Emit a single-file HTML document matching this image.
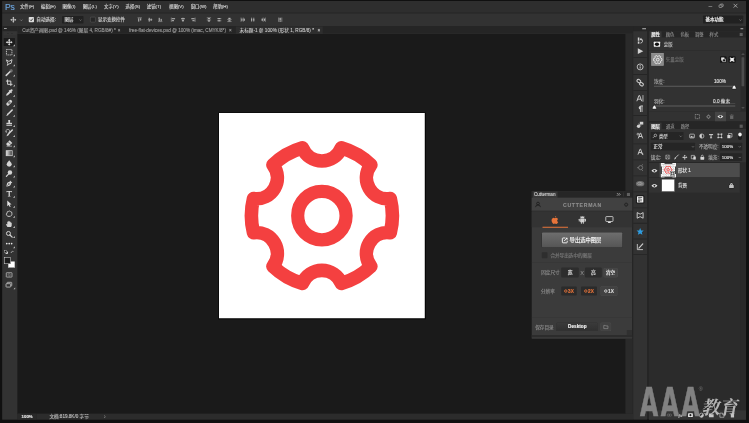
<!DOCTYPE html>
<html lang="zh-CN">
<head>
<meta charset="utf-8">
<title>Photoshop - Cutterman</title>
<style>
html,body{margin:0;padding:0;background:#101010;}
body{width:749px;height:423px;overflow:hidden;position:relative;}
#app{position:absolute;left:0;top:0;width:2996px;height:1692px;transform:scale(0.25);transform-origin:0 0;font-family:"Liberation Sans","Noto Sans CJK SC",sans-serif;filter:opacity(0.9999);-webkit-text-stroke:0.5px;}
#app div,#app svg{position:absolute;}
#app svg{overflow:visible;display:block;}
</style>
</head>
<body>
<div id="app">
<div style="left:0px;top:0px;width:2996px;height:1692px;background:#101010;overflow:hidden;"><div style="left:8.8px;top:4px;width:2975.2px;height:1674.4px;background:#252525;"><div style="left:0px;top:0px;width:2975.2px;height:46.8px;background:#2e2e2e;"><div style="left:10.8px;top:-0.48px;font-size:34.4px;line-height:48.16px;color:#6ba4de;white-space:nowrap;letter-spacing:-0.2px;">Ps</div>
<div style="left:70.8px;top:11.28px;font-size:17.6px;line-height:24.64px;color:#d6d6d6;white-space:nowrap;">文件(F)</div>
<div style="left:155.2px;top:11.28px;font-size:17.6px;line-height:24.64px;color:#d6d6d6;white-space:nowrap;">编辑(E)</div>
<div style="left:241.2px;top:11.28px;font-size:17.6px;line-height:24.64px;color:#d6d6d6;white-space:nowrap;">图像(I)</div>
<div style="left:322px;top:11.28px;font-size:17.6px;line-height:24.64px;color:#d6d6d6;white-space:nowrap;">图层(L)</div>
<div style="left:407.2px;top:11.28px;font-size:17.6px;line-height:24.64px;color:#d6d6d6;white-space:nowrap;">文字(Y)</div>
<div style="left:493.6px;top:11.28px;font-size:17.6px;line-height:24.64px;color:#d6d6d6;white-space:nowrap;">选择(S)</div>
<div style="left:578.4px;top:11.28px;font-size:17.6px;line-height:24.64px;color:#d6d6d6;white-space:nowrap;">滤镜(T)</div>
<div style="left:667.2px;top:11.28px;font-size:17.6px;line-height:24.64px;color:#d6d6d6;white-space:nowrap;">视图(V)</div>
<div style="left:754px;top:11.28px;font-size:17.6px;line-height:24.64px;color:#d6d6d6;white-space:nowrap;">窗口(W)</div>
<div style="left:843.2px;top:11.28px;font-size:17.6px;line-height:24.64px;color:#d6d6d6;white-space:nowrap;">帮助(H)</div>
<div style="left:2825.6px;top:22px;width:14.8px;height:2.4px;background:#bdbdbd;"></div>
<svg viewBox="0 0 10 10" style="left:2865.2px;top:9.2px;width:20.8px;height:20.8px;"><rect x="1" y="3.4" width="5.6" height="4.6" rx="1" fill="none" stroke="#bdbdbd" stroke-width="1.2"/><path d="M3.4 3.2V2.6Q3.4 1.6 4.4 1.6H8Q9 1.6 9 2.6V5.4Q9 6.4 8 6.4H7" fill="none" stroke="#bdbdbd" stroke-width="1.2"/></svg>
<svg viewBox="0 0 10 10" style="left:2923.2px;top:8.8px;width:20px;height:20px;"><path d="M1.2 1.2L8.8 8.8M8.8 1.2L1.2 8.8" stroke="#cfcfcf" stroke-width="1.3" fill="none"/></svg>
</div>
<div style="left:0px;top:46.8px;width:2975.2px;height:2.8px;background:#242424;"></div>
<div style="left:0px;top:49.6px;width:2975.2px;height:50.4px;background:#323232;"><svg viewBox="0 0 10 10" style="left:31.6px;top:12.4px;width:26.4px;height:26.4px;"><path d="M5 0.4L6.7 2.6H5.6V4.4H7.4V3.3L9.6 5L7.4 6.7V5.6H5.6V7.4H6.7L5 9.6L3.3 7.4H4.4V5.6H2.6V6.7L0.4 5L2.6 3.3V4.4H4.4V2.6H3.3Z" fill="#d8d8d8"/></svg>
<svg viewBox="0 0 10 10" style="left:70.4px;top:20px;width:12.8px;height:12.8px;"><path d="M1.5 3.5L5 7L8.5 3.5" fill="none" stroke="#aaa" stroke-width="1.6"/></svg>
<div style="left:106px;top:14px;width:21.6px;height:21.6px;background:#dcdcdc;border-radius:3.2px;"><svg viewBox="0 0 10 10" style="left:2px;top:2px;width:17.6px;height:17.6px;"><path d="M2 5L4.3 7.4L8.2 2.4" fill="none" stroke="#222" stroke-width="1.9"/></svg>
</div>
<div style="left:136.4px;top:12.72px;font-size:18.4px;line-height:25.76px;color:#dadada;white-space:nowrap;">自动选择:</div>
<div style="left:239.2px;top:10.4px;width:85.6px;height:30px;background:#212121;border-radius:2.8px;"><div style="left:10.4px;top:2.6px;font-size:18px;line-height:25.2px;color:#dadada;white-space:nowrap;">图层</div>
<svg viewBox="0 0 10 10" style="left:67.6px;top:10px;width:12px;height:12px;"><path d="M1.5 3.5L5 7L8.5 3.5" fill="none" stroke="#aaa" stroke-width="1.6"/></svg>
</div>
<div style="left:352px;top:14px;width:21.6px;height:21.6px;background:#262626;border:1.8px solid #909090;border-radius:3.2px;box-sizing:border-box;"></div>
<div style="left:382.8px;top:13px;font-size:18px;line-height:25.2px;color:#dadada;white-space:nowrap;">显示变换控件</div>
<svg viewBox="0 0 10 10" style="left:539.2px;top:14.8px;width:21.6px;height:21.6px;"><path d="M1 1.5H9" stroke="#b4b4b4" stroke-width="1"/><rect x="2.2" y="2.5" width="2" height="6" fill="#b4b4b4"/><rect x="5.8" y="2.5" width="2" height="4" fill="#b4b4b4"/></svg>
<svg viewBox="0 0 10 10" style="left:580.8px;top:14.8px;width:21.6px;height:21.6px;"><path d="M1 5H9" stroke="#b4b4b4" stroke-width="1"/><rect x="2.2" y="1.5" width="2" height="7" fill="#b4b4b4"/><rect x="5.8" y="3" width="2" height="4" fill="#b4b4b4"/></svg>
<svg viewBox="0 0 10 10" style="left:620.8px;top:14.8px;width:21.6px;height:21.6px;"><path d="M1 8.5H9" stroke="#b4b4b4" stroke-width="1"/><rect x="2.2" y="1.5" width="2" height="6" fill="#b4b4b4"/><rect x="5.8" y="3.5" width="2" height="4" fill="#b4b4b4"/></svg>
<svg viewBox="0 0 10 10" style="left:673.2px;top:14.8px;width:21.6px;height:21.6px;"><path d="M1.5 1V9" stroke="#b4b4b4" stroke-width="1"/><rect x="2.5" y="2.2" width="6" height="2" fill="#b4b4b4"/><rect x="2.5" y="5.8" width="4" height="2" fill="#b4b4b4"/></svg>
<svg viewBox="0 0 10 10" style="left:712.4px;top:14.8px;width:21.6px;height:21.6px;"><path d="M5 1V9" stroke="#b4b4b4" stroke-width="1"/><rect x="1.5" y="2.2" width="7" height="2" fill="#b4b4b4"/><rect x="3" y="5.8" width="4" height="2" fill="#b4b4b4"/></svg>
<svg viewBox="0 0 10 10" style="left:753.2px;top:14.8px;width:21.6px;height:21.6px;"><path d="M8.5 1V9" stroke="#b4b4b4" stroke-width="1"/><rect x="1.5" y="2.2" width="6" height="2" fill="#b4b4b4"/><rect x="3.5" y="5.8" width="4" height="2" fill="#b4b4b4"/></svg>
<svg viewBox="0 0 10 10" style="left:816px;top:14.8px;width:21.6px;height:21.6px;"><path d="M1 1.5H9M1 5.5H9" stroke="#b4b4b4" stroke-width="1"/><rect x="3" y="2" width="4" height="2" fill="#b4b4b4"/><rect x="3" y="6" width="4" height="2.5" fill="#b4b4b4"/></svg>
<svg viewBox="0 0 10 10" style="left:857.6px;top:14.8px;width:21.6px;height:21.6px;"><path d="M1 3H9M1 7H9" stroke="#b4b4b4" stroke-width="1"/><rect x="3" y="2" width="4" height="2" fill="#b4b4b4"/><rect x="3" y="6" width="4" height="2" fill="#b4b4b4"/></svg>
<svg viewBox="0 0 10 10" style="left:898.4px;top:14.8px;width:21.6px;height:21.6px;"><path d="M1 4.5H9M1 8.5H9" stroke="#b4b4b4" stroke-width="1"/><rect x="3" y="1.5" width="4" height="2.5" fill="#b4b4b4"/><rect x="3" y="6" width="4" height="2" fill="#b4b4b4"/></svg>
<svg viewBox="0 0 10 10" style="left:952.4px;top:14.8px;width:21.6px;height:21.6px;"><path d="M1.5 1V9M5.5 1V9" stroke="#b4b4b4" stroke-width="1"/><rect x="2" y="3" width="2" height="4" fill="#b4b4b4"/><rect x="6" y="3" width="2.5" height="4" fill="#b4b4b4"/></svg>
<svg viewBox="0 0 10 10" style="left:991.2px;top:14.8px;width:21.6px;height:21.6px;"><path d="M3 1V9M7 1V9" stroke="#b4b4b4" stroke-width="1"/><rect x="2" y="3" width="2" height="4" fill="#b4b4b4"/><rect x="6" y="3" width="2" height="4" fill="#b4b4b4"/></svg>
<svg viewBox="0 0 10 10" style="left:1034px;top:14.8px;width:21.6px;height:21.6px;"><path d="M4.5 1V9M8.5 1V9" stroke="#b4b4b4" stroke-width="1"/><rect x="1.5" y="3" width="2.5" height="4" fill="#b4b4b4"/><rect x="6" y="3" width="2" height="4" fill="#b4b4b4"/></svg>
<svg viewBox="0 0 10 10" style="left:1101.6px;top:14.8px;width:21.6px;height:21.6px;"><path d="M2 1V9M8 1V9" stroke="#b4b4b4" stroke-width="1"/><rect x="3.4" y="1.5" width="3.2" height="1.8" fill="#b4b4b4"/><rect x="3.4" y="4.1" width="3.2" height="1.8" fill="#b4b4b4"/><rect x="3.4" y="6.7" width="3.2" height="1.8" fill="#b4b4b4"/></svg>
<div style="left:2803.2px;top:8.4px;width:160.8px;height:32.4px;background:#212121;border-radius:2.8px;"><div style="left:10.4px;top:4.2px;font-size:18px;line-height:25.2px;color:#e4e4e4;white-space:nowrap;font-weight:bold;">基本功能</div>
<svg viewBox="0 0 10 10" style="left:144.4px;top:12px;width:12px;height:12px;"><path d="M1.5 3.5L5 7L8.5 3.5" fill="none" stroke="#aaa" stroke-width="1.6"/></svg>
</div>
</div>
<div style="left:61.6px;top:100px;width:2462.8px;height:32px;background:#252525;"><div style="left:18.4px;top:4.98px;font-size:18.6px;line-height:26.04px;color:#9c9c9c;white-space:nowrap;">Cut资产画图.psd @ 146% (图层 4, RGB/8#) *</div>
<div style="left:405.6px;top:5.12px;font-size:18.4px;line-height:25.76px;color:#9a9a9a;white-space:nowrap;transform:translateX(-50%);">×</div>
<div style="left:445.6px;top:4.98px;font-size:18.6px;line-height:26.04px;color:#9c9c9c;white-space:nowrap;">free-flat-devices.psd @ 100% (imac, CMYK/8*)</div>
<div style="left:850.8px;top:5.12px;font-size:18.4px;line-height:25.76px;color:#9a9a9a;white-space:nowrap;transform:translateX(-50%);">×</div>
<div style="left:0px;top:29.2px;width:2462.8px;height:2.8px;background:#2a2a2a;"></div>
<div style="left:872.4px;top:2px;width:348px;height:30px;background:#2e2e2e;"><div style="left:15.2px;top:2.98px;font-size:18.6px;line-height:26.04px;color:#d8d8d8;white-space:nowrap;-webkit-text-stroke:0.2px;">未标题-1 @ 100% (形状 1, RGB/8) *</div>
<div style="left:332.4px;top:3.12px;font-size:18.4px;line-height:25.76px;color:#c0c0c0;white-space:nowrap;transform:translateX(-50%);">×</div>
</div>
</div>
<div style="left:0px;top:100px;width:61.6px;height:1574.4px;background:#323232;"><div style="left:0px;top:0px;width:61.6px;height:20.8px;background:#252525;"></div>
<div style="left:7.2px;top:8px;width:10.8px;height:2.8px;background:#c4c4c4;"></div>
<div style="left:4.4px;top:22.4px;width:53.6px;height:13.6px;background:#353535;"></div>
<div style="left:11.2px;top:28.4px;width:40px;height:1.6px;background:repeating-linear-gradient(90deg,#262626 0 1.6px,transparent 1.6px 3.2px);"></div>
<div style="left:6.4px;top:47.6px;width:45.2px;height:32px;background:#1c1c1c;border-radius:2px;"></div>
<svg viewBox="0 0 10 10" style="left:13.2px;top:50px;width:29.6px;height:29.6px;"><path d="M5 0.4L6.7 2.6H5.6V4.4H7.4V3.3L9.6 5L7.4 6.7V5.6H5.6V7.4H6.7L5 9.6L3.3 7.4H4.4V5.6H2.6V6.7L0.4 5L2.6 3.3V4.4H4.4V2.6H3.3Z" fill="#e6e6e6"/></svg>
<svg viewBox="0 0 10 10" style="left:43px;top:72.6px;width:7.6px;height:7.6px;"><path d="M10 0V10H0Z" fill="#c4c4c4" stroke="#1e1e1e" stroke-width="1.5" paint-order="stroke"/></svg>
<svg viewBox="0 0 10 10" style="left:13.2px;top:90.4px;width:29.6px;height:29.6px;"><rect x="1.3" y="1.3" width="7.4" height="7.4" fill="none" stroke="#d4d4d4" stroke-width="1.1" stroke-dasharray="1.7 0.9"/></svg>
<svg viewBox="0 0 10 10" style="left:43px;top:113px;width:7.6px;height:7.6px;"><path d="M10 0V10H0Z" fill="#c4c4c4" stroke="#1e1e1e" stroke-width="1.5" paint-order="stroke"/></svg>
<svg viewBox="0 0 10 10" style="left:13.2px;top:130.8px;width:29.6px;height:29.6px;"><path d="M1.2 1.5L4.6 3.6L8.8 1.2L7.6 6.2L4.2 7.2L2.6 9L3.2 6.2Z" fill="none" stroke="#d4d4d4" stroke-width="1.2" stroke-linejoin="round"/></svg>
<svg viewBox="0 0 10 10" style="left:43px;top:153.4px;width:7.6px;height:7.6px;"><path d="M10 0V10H0Z" fill="#c4c4c4" stroke="#1e1e1e" stroke-width="1.5" paint-order="stroke"/></svg>
<svg viewBox="0 0 10 10" style="left:13.2px;top:171.2px;width:29.6px;height:29.6px;"><path d="M1 9L6 4" stroke="#d4d4d4" stroke-width="2.1" stroke-linecap="round"/><path d="M7.6 0.6V2.2M7.6 3.6V5M5.6 2.8H6.9M8.4 2.8H9.7M6.3 1.5L6.9 2.1M8.9 1.5L8.3 2.1M8.9 4.1L8.3 3.5" stroke="#d4d4d4" stroke-width="0.8"/></svg>
<svg viewBox="0 0 10 10" style="left:43px;top:193.8px;width:7.6px;height:7.6px;"><path d="M10 0V10H0Z" fill="#c4c4c4" stroke="#1e1e1e" stroke-width="1.5" paint-order="stroke"/></svg>
<svg viewBox="0 0 10 10" style="left:13.2px;top:211.6px;width:29.6px;height:29.6px;"><path d="M2.8 0.6V7.2H9.4M0.6 2.8H7.2V9.4" fill="none" stroke="#d4d4d4" stroke-width="1.3"/></svg>
<svg viewBox="0 0 10 10" style="left:43px;top:234.2px;width:7.6px;height:7.6px;"><path d="M10 0V10H0Z" fill="#c4c4c4" stroke="#1e1e1e" stroke-width="1.5" paint-order="stroke"/></svg>
<svg viewBox="0 0 10 10" style="left:13.2px;top:252px;width:29.6px;height:29.6px;"><path d="M0.8 9.2L1.4 6.8L5.4 2.8L7.2 4.6L3.2 8.6Z" fill="#d4d4d4"/><path d="M4.8 1.8L8.2 5.2" stroke="#d4d4d4" stroke-width="1.5"/><path d="M6.6 3.4L8.2 1.8" stroke="#d4d4d4" stroke-width="2.8" stroke-linecap="round"/></svg>
<svg viewBox="0 0 10 10" style="left:43px;top:274.6px;width:7.6px;height:7.6px;"><path d="M10 0V10H0Z" fill="#c4c4c4" stroke="#1e1e1e" stroke-width="1.5" paint-order="stroke"/></svg>
<svg viewBox="0 0 10 10" style="left:13.2px;top:292.4px;width:29.6px;height:29.6px;"><g transform="rotate(-45 5 5)"><rect x="0.4" y="2.9" width="9.2" height="4.2" rx="1.9" fill="#d4d4d4"/><rect x="3.4" y="3.4" width="3.2" height="3.2" fill="#2f2f2f" opacity=".55"/></g></svg>
<svg viewBox="0 0 10 10" style="left:43px;top:315px;width:7.6px;height:7.6px;"><path d="M10 0V10H0Z" fill="#c4c4c4" stroke="#1e1e1e" stroke-width="1.5" paint-order="stroke"/></svg>
<svg viewBox="0 0 10 10" style="left:13.2px;top:332.8px;width:29.6px;height:29.6px;"><path d="M9 1L4.6 5.4" stroke="#d4d4d4" stroke-width="2.2" stroke-linecap="round"/><path d="M3.9 5.2L4.8 6.1Q4.4 8.6 0.9 9.1Q2.2 7.4 2.2 6.4Q2.6 5.2 3.9 5.2Z" fill="#d4d4d4"/></svg>
<svg viewBox="0 0 10 10" style="left:43px;top:355.4px;width:7.6px;height:7.6px;"><path d="M10 0V10H0Z" fill="#c4c4c4" stroke="#1e1e1e" stroke-width="1.5" paint-order="stroke"/></svg>
<svg viewBox="0 0 10 10" style="left:13.2px;top:373.2px;width:29.6px;height:29.6px;"><path d="M3.6 0.9H6.4L6 4.6H8.2Q8.8 4.6 8.8 5.2V6.6H1.2V5.2Q1.2 4.6 1.8 4.6H4Z" fill="#d4d4d4"/><rect x="1.2" y="7.6" width="7.6" height="1.2" fill="#d4d4d4"/></svg>
<svg viewBox="0 0 10 10" style="left:43px;top:395.8px;width:7.6px;height:7.6px;"><path d="M10 0V10H0Z" fill="#c4c4c4" stroke="#1e1e1e" stroke-width="1.5" paint-order="stroke"/></svg>
<svg viewBox="0 0 10 10" style="left:13.2px;top:413.6px;width:29.6px;height:29.6px;"><path d="M9.2 0.8L4.8 5.2" stroke="#d4d4d4" stroke-width="2" stroke-linecap="round"/><path d="M4 5L5 6Q4.6 8.4 1.2 9Q2.4 7.4 2.4 6.4Q2.8 5.2 4 5Z" fill="#d4d4d4"/><path d="M0.8 3.6A2.6 2.6 0 1 1 3.6 5" fill="none" stroke="#d4d4d4" stroke-width="0.9"/><path d="M0 2.6L0.8 4.4L2.4 3.2Z" fill="#d4d4d4"/></svg>
<svg viewBox="0 0 10 10" style="left:43px;top:436.2px;width:7.6px;height:7.6px;"><path d="M10 0V10H0Z" fill="#c4c4c4" stroke="#1e1e1e" stroke-width="1.5" paint-order="stroke"/></svg>
<svg viewBox="0 0 10 10" style="left:13.2px;top:454px;width:29.6px;height:29.6px;"><path d="M5.6 1L9.2 4.6L5.4 8.4H2.6L0.8 6.2Z" fill="#d4d4d4"/><path d="M3.6 3.2L7.2 6.8" stroke="#2f2f2f" stroke-width="0.9"/><path d="M1.4 9H8.8" stroke="#d4d4d4" stroke-width="0.9"/></svg>
<svg viewBox="0 0 10 10" style="left:43px;top:476.6px;width:7.6px;height:7.6px;"><path d="M10 0V10H0Z" fill="#c4c4c4" stroke="#1e1e1e" stroke-width="1.5" paint-order="stroke"/></svg>
<svg viewBox="0 0 10 10" style="left:13.2px;top:494.4px;width:29.6px;height:29.6px;"><defs><linearGradient id="gr"><stop offset="0" stop-color="#e8e8e8"/><stop offset="1" stop-color="#3a3a3a"/></linearGradient></defs><rect x="0.9" y="1.6" width="8.2" height="6.8" fill="url(#gr)" stroke="#d4d4d4" stroke-width="1"/></svg>
<svg viewBox="0 0 10 10" style="left:43px;top:517px;width:7.6px;height:7.6px;"><path d="M10 0V10H0Z" fill="#c4c4c4" stroke="#1e1e1e" stroke-width="1.5" paint-order="stroke"/></svg>
<svg viewBox="0 0 10 10" style="left:13.2px;top:534.8px;width:29.6px;height:29.6px;"><path d="M5 0.8Q8.4 4.6 8.4 6.2A3.4 3.2 0 0 1 1.6 6.2Q1.6 4.6 5 0.8Z" fill="#d4d4d4"/></svg>
<svg viewBox="0 0 10 10" style="left:43px;top:557.4px;width:7.6px;height:7.6px;"><path d="M10 0V10H0Z" fill="#c4c4c4" stroke="#1e1e1e" stroke-width="1.5" paint-order="stroke"/></svg>
<svg viewBox="0 0 10 10" style="left:13.2px;top:575.2px;width:29.6px;height:29.6px;"><circle cx="6" cy="3.8" r="3" fill="#d4d4d4"/><path d="M4 6L1.2 9" stroke="#d4d4d4" stroke-width="1.6" stroke-linecap="round"/></svg>
<svg viewBox="0 0 10 10" style="left:43px;top:597.8px;width:7.6px;height:7.6px;"><path d="M10 0V10H0Z" fill="#c4c4c4" stroke="#1e1e1e" stroke-width="1.5" paint-order="stroke"/></svg>
<svg viewBox="0 0 10 10" style="left:13.2px;top:615.6px;width:29.6px;height:29.6px;"><path d="M6.2 0.8L9.2 3.8L7.6 4.4Q7.4 7 5.8 7.8L1 9L2.2 4.2Q3 2.6 5.6 2.4Z" fill="#d4d4d4"/><circle cx="4.6" cy="5.4" r="0.9" fill="#2f2f2f"/><path d="M1 9L4.2 5.8" stroke="#2f2f2f" stroke-width="0.6"/></svg>
<svg viewBox="0 0 10 10" style="left:43px;top:638.2px;width:7.6px;height:7.6px;"><path d="M10 0V10H0Z" fill="#c4c4c4" stroke="#1e1e1e" stroke-width="1.5" paint-order="stroke"/></svg>
<svg viewBox="0 0 10 10" style="left:13.2px;top:656px;width:29.6px;height:29.6px;"><path d="M1.4 1.2H8.6V3.2H7.8V2.4H5.8V8H6.8V8.9H3.2V8H4.2V2.4H2.2V3.2H1.4Z" fill="#e2e2e2"/></svg>
<svg viewBox="0 0 10 10" style="left:43px;top:678.6px;width:7.6px;height:7.6px;"><path d="M10 0V10H0Z" fill="#c4c4c4" stroke="#1e1e1e" stroke-width="1.5" paint-order="stroke"/></svg>
<svg viewBox="0 0 10 10" style="left:13.2px;top:696.4px;width:29.6px;height:29.6px;"><path d="M2.4 0.8V8.6L4.4 6.8L5.8 9.6L7 9L5.6 6.2H8.2Z" fill="#e2e2e2"/></svg>
<svg viewBox="0 0 10 10" style="left:43px;top:719px;width:7.6px;height:7.6px;"><path d="M10 0V10H0Z" fill="#c4c4c4" stroke="#1e1e1e" stroke-width="1.5" paint-order="stroke"/></svg>
<svg viewBox="0 0 10 10" style="left:13.2px;top:736.8px;width:29.6px;height:29.6px;"><path d="M2.2 3.4Q2 1.4 4 1.6Q5.6 0.4 6.8 1.8Q9 2 8.6 4.2Q9.6 6.2 7.6 7Q6.8 9 4.8 8.2Q2.6 9 2 7Q0.2 5.6 2.2 3.4Z" fill="none" stroke="#d4d4d4" stroke-width="1.2"/></svg>
<svg viewBox="0 0 10 10" style="left:43px;top:759.4px;width:7.6px;height:7.6px;"><path d="M10 0V10H0Z" fill="#c4c4c4" stroke="#1e1e1e" stroke-width="1.5" paint-order="stroke"/></svg>
<svg viewBox="0 0 10 10" style="left:13.2px;top:777.2px;width:29.6px;height:29.6px;"><path d="M2.6 9.2Q1.2 7.2 0.6 5.4Q1.4 4.6 2.4 5.8V2.2Q3.2 1.4 3.8 2.2V1.2Q4.7 0.4 5.4 1.2V2Q6.2 1.4 6.9 2.2V3.2Q7.8 2.6 8.4 3.6V6.6Q8.4 8.2 7.4 9.2Z" fill="#d4d4d4"/></svg>
<svg viewBox="0 0 10 10" style="left:43px;top:799.8px;width:7.6px;height:7.6px;"><path d="M10 0V10H0Z" fill="#c4c4c4" stroke="#1e1e1e" stroke-width="1.5" paint-order="stroke"/></svg>
<svg viewBox="0 0 10 10" style="left:13.2px;top:817.6px;width:29.6px;height:29.6px;"><circle cx="4" cy="4" r="2.7" fill="none" stroke="#d4d4d4" stroke-width="1.3"/><path d="M6 6L9 9" stroke="#d4d4d4" stroke-width="1.7" stroke-linecap="round"/></svg>
<svg viewBox="0 0 10 10" style="left:43px;top:840.2px;width:7.6px;height:7.6px;"><path d="M10 0V10H0Z" fill="#c4c4c4" stroke="#1e1e1e" stroke-width="1.5" paint-order="stroke"/></svg>
<svg viewBox="0 0 10 10" style="left:13.2px;top:858px;width:29.6px;height:29.6px;"><circle cx="1.7" cy="4.1" r="1.15" fill="#e8e8e8"/><circle cx="5" cy="4.1" r="1.15" fill="#e8e8e8"/><circle cx="8.3" cy="4.1" r="1.15" fill="#e8e8e8"/></svg>
<svg viewBox="0 0 10 10" style="left:43px;top:880.6px;width:7.6px;height:7.6px;"><path d="M10 0V10H0Z" fill="#c4c4c4" stroke="#1e1e1e" stroke-width="1.5" paint-order="stroke"/></svg>
<svg viewBox="0 0 10 10" style="left:8.8px;top:898px;width:14.4px;height:14.4px;"><rect x="3.6" y="3.6" width="5.6" height="5.6" fill="#eee" stroke="#eee" stroke-width="0.6"/><rect x="0.8" y="0.8" width="5.6" height="5.6" fill="#111" stroke="#ddd" stroke-width="1"/></svg>
<svg viewBox="0 0 10 10" style="left:32.8px;top:897.6px;width:15.2px;height:15.2px;"><path d="M2 4.4Q2.4 1.8 6.6 2.2" fill="none" stroke="#ccc" stroke-width="1.1"/><path d="M6 0.4L8.4 2.4L6 4.2Z" fill="#ccc"/><path d="M0.2 4L2 6.6L3.8 4Z" fill="#ccc"/></svg>
<div style="left:23.2px;top:941.2px;width:27.6px;height:26px;background:#ffffff;border:1.4px solid #1a1a1a;box-sizing:border-box;"></div>
<div style="left:7.2px;top:924.8px;width:26.8px;height:27.2px;background:#1c1c1c;border:2.8px solid #e0e0e0;box-sizing:border-box;"></div>
<svg viewBox="0 0 10 10" style="left:14.4px;top:982.4px;width:27.2px;height:27.2px;"><rect x="0.8" y="1.8" width="8.4" height="6.4" rx="0.6" fill="none" stroke="#cfcfcf" stroke-width="1"/><circle cx="5" cy="5" r="1.7" fill="none" stroke="#cfcfcf" stroke-width="0.9" stroke-dasharray="0.9 0.6"/></svg>
<svg viewBox="0 0 10 10" style="left:13.6px;top:1022.4px;width:27.2px;height:27.2px;"><rect x="0.8" y="3.2" width="6.8" height="5" rx="0.8" fill="none" stroke="#cfcfcf" stroke-width="1.1"/><path d="M2.4 3V2Q2.4 1.2 3.2 1.2H8.4Q9.2 1.2 9.2 2V5.6Q9.2 6.4 8.4 6.4H7.8" fill="none" stroke="#cfcfcf" stroke-width="1.1"/></svg>
<svg viewBox="0 0 10 10" style="left:45px;top:1045.8px;width:6.8px;height:6.8px;"><path d="M10 0V10H0Z" fill="#bdbdbd"/></svg>
</div>
<div style="left:61.6px;top:132px;width:2432.4px;height:1519.2px;background:#1a1a1a;overflow:hidden;"><div style="left:805.6px;top:316px;width:822.8px;height:821.2px;background:#ffffff;box-shadow:0.8px 1.2px 0 3px #000;"><svg viewBox="219 113 205.7 205.3" style="left:0px;top:0px;width:822.8px;height:821.2px;"><path d="M390.31 198.61A70.50 70.50 0 0 1 390.31 232.69A21.00 21.00 0 0 0 370.87 266.37A70.50 70.50 0 0 1 341.34 283.42A21.00 21.00 0 0 0 302.46 283.42A70.50 70.50 0 0 1 272.93 266.37A21.00 21.00 0 0 0 253.49 232.69A70.50 70.50 0 0 1 253.49 198.61A21.00 21.00 0 0 0 272.93 164.93A70.50 70.50 0 0 1 302.46 147.88A21.00 21.00 0 0 0 341.34 147.88A70.50 70.50 0 0 1 370.87 164.93A21.00 21.00 0 0 0 390.31 198.61Z" fill="none" stroke="#f44040" stroke-width="13.60" stroke-linejoin="round"/><circle cx="321.90" cy="215.65" r="24.2" fill="none" stroke="#f44040" stroke-width="13.2"/></svg>
</div>
</div>
<div style="left:61.6px;top:1651.2px;width:2462.8px;height:23.2px;background:#2c2c2c;"><div style="left:0px;top:0px;width:73.6px;height:23.2px;background:#292929;"></div>
<div style="left:73.6px;top:0px;width:2px;height:23.2px;background:#222;"></div>
<div style="left:16px;top:-0.44px;font-size:17.2px;line-height:24.08px;color:#e8e8e8;white-space:nowrap;font-weight:bold;">100%</div>
<div style="left:127.2px;top:-1.28px;font-size:18.4px;line-height:25.76px;color:#bdbdbd;white-space:nowrap;">文档:819.8K/0 字节</div>
<svg viewBox="0 0 10 10" style="left:341.2px;top:4.8px;width:13.6px;height:13.6px;"><path d="M3.2 1.2L7 5L3.2 8.8" fill="none" stroke="#aaa" stroke-width="1.6"/></svg>
</div>
<div style="left:2560px;top:109.2px;width:15.2px;height:3.6px;background:#b8b8b8;"></div>
<div style="left:2952.8px;top:109.2px;width:11.2px;height:3.6px;background:#b8b8b8;"></div>
<div style="left:2524.4px;top:120.8px;width:54.8px;height:1553.6px;background:#323232;"><div style="left:0px;top:102.8px;width:54.8px;height:3.6px;background:#252525;"></div>
<div style="left:0px;top:171.2px;width:54.8px;height:3.6px;background:#252525;"></div>
<div style="left:0px;top:236px;width:54.8px;height:3.6px;background:#252525;"></div>
<div style="left:0px;top:335.2px;width:54.8px;height:3.6px;background:#252525;"></div>
<div style="left:0px;top:448.8px;width:54.8px;height:3.6px;background:#252525;"></div>
<div style="left:0px;top:512.8px;width:54.8px;height:3.6px;background:#252525;"></div>
<div style="left:0px;top:576.8px;width:54.8px;height:3.6px;background:#252525;"></div>
<div style="left:0px;top:640.8px;width:54.8px;height:3.6px;background:#252525;"></div>
<div style="left:0px;top:704.8px;width:54.8px;height:3.6px;background:#252525;"></div>
<div style="left:0px;top:766.4px;width:54.8px;height:3.6px;background:#252525;"></div>
<div style="left:0px;top:829.6px;width:54.8px;height:3.6px;background:#252525;"></div>
<div style="left:0px;top:892px;width:54.8px;height:3.6px;background:#252525;"></div>
<svg viewBox="0 0 10 10" style="left:12px;top:22px;width:31.2px;height:31.2px;"><path d="M2 1H4V5H2ZM2 6H4V9H2Z" fill="#d0d0d0"/><path d="M5 3.2Q8.6 2.4 8 6Q7.6 7.8 5.4 8.2" fill="none" stroke="#d0d0d0" stroke-width="1.2"/><path d="M4.4 3.2L6.6 1.2V5Z" fill="#d0d0d0"/></svg>
<svg viewBox="0 0 10 10" style="left:12px;top:64.4px;width:31.2px;height:31.2px;"><path d="M2 1.4L9 5L2 8.6Z" fill="#d0d0d0"/></svg>
<svg viewBox="0 0 10 10" style="left:12px;top:127.6px;width:31.2px;height:31.2px;"><circle cx="5" cy="5" r="3.8" fill="none" stroke="#d0d0d0" stroke-width="1.1"/><path d="M5 4.4V7.2" stroke="#d0d0d0" stroke-width="1.2"/><circle cx="5" cy="3" r="0.7" fill="#d0d0d0"/></svg>
<svg viewBox="0 0 10 10" style="left:12px;top:190px;width:31.2px;height:31.2px;"><g fill="none" stroke="#d0d0d0" stroke-width="1.3"><rect x="0.8" y="1.2" width="5" height="3.6" rx="1.6" transform="rotate(35 3.3 3)"/><rect x="4.2" y="5.2" width="5" height="3.6" rx="1.6" transform="rotate(35 6.7 7)"/></g></svg>
<svg viewBox="0 0 10 10" style="left:12px;top:253.6px;width:31.2px;height:31.2px;"><path d="M0.8 8.6L3.4 1.4H4.4L7 8.6M1.8 6H6" fill="none" stroke="#d0d0d0" stroke-width="1.2"/><path d="M8.6 0.8V9.2" stroke="#d0d0d0" stroke-width="1"/></svg>
<svg viewBox="0 0 10 10" style="left:12px;top:294.8px;width:31.2px;height:31.2px;"><path d="M5.4 1.2H8.6M5.4 1.2V9M7.4 1.2V9" stroke="#d0d0d0" stroke-width="1.1" fill="none"/><path d="M5.4 1.2A2.3 2.3 0 0 0 5.4 5.8Z" fill="#d0d0d0"/></svg>
<svg viewBox="0 0 10 10" style="left:12px;top:358.8px;width:31.2px;height:31.2px;"><circle cx="3" cy="6.8" r="2.2" fill="#d0d0d0"/><rect x="4.6" y="1" width="4.4" height="3.6" fill="#d0d0d0"/><path d="M3.4 3.4L6 6" stroke="#d0d0d0" stroke-width="1"/></svg>
<svg viewBox="0 0 10 10" style="left:12px;top:401.2px;width:31.2px;height:31.2px;"><path d="M2.6 8.8L5 2.2H5.8L8.2 8.8M3.6 6.4H7.2" fill="none" stroke="#d0d0d0" stroke-width="1.2"/><circle cx="2.2" cy="3.4" r="1.2" fill="none" stroke="#d0d0d0" stroke-width="0.9"/></svg>
<svg viewBox="0 0 10 10" style="left:12px;top:466px;width:31.2px;height:31.2px;"><path d="M2.2 8.8L4.8 1.8H5.6L8 8.8M3.2 6.2H7" fill="none" stroke="#d0d0d0" stroke-width="1.2"/><path d="M5.4 6.4Q9.4 6.2 8.6 9.4" fill="none" stroke="#d0d0d0" stroke-width="0.9"/></svg>
<svg viewBox="0 0 10 10" style="left:12px;top:530px;width:31.2px;height:31.2px;"><circle cx="5.6" cy="5" r="2.6" fill="none" stroke="#777" stroke-width="1.2"/><path d="M1 5H3.4M6.8 2.4L8.6 0.8M6.8 7.6L8.6 9.2" stroke="#777" stroke-width="1.1"/></svg>
<svg viewBox="0 0 10 10" style="left:12px;top:594px;width:31.2px;height:31.2px;"><ellipse cx="5" cy="5" rx="5.4" ry="3.4" fill="#707070"/><ellipse cx="4.4" cy="4.8" rx="2.6" ry="1.5" fill="none" stroke="#a8a8a8" stroke-width="0.8"/><ellipse cx="6.2" cy="5.3" rx="2" ry="1.2" fill="none" stroke="#9a9a9a" stroke-width="0.7"/></svg>
<svg viewBox="0 0 10 10" style="left:12px;top:657.2px;width:31.2px;height:31.2px;"><rect x="-0.4" y="-0.4" width="10.8" height="10.8" rx="1.8" fill="#161616"/><rect x="0.9" y="0.9" width="8.2" height="8.2" rx="0.6" fill="#f2f2f2"/><path d="M2.4 2.6H7.6M2.4 4.4H5.4M6.2 4.2V7.6M2.6 6H4.6V7.6H2.6Z" fill="none" stroke="#333" stroke-width="0.9"/></svg>
<svg viewBox="0 0 10 10" style="left:12px;top:720.8px;width:31.2px;height:31.2px;"><path d="M1.2 1.4L5 3.4L8.8 1.4V8.6L5 6.6L1.2 8.6Z" fill="none" stroke="#d0d0d0" stroke-width="1.2" stroke-linejoin="round"/></svg>
<svg viewBox="0 0 10 10" style="left:12px;top:784.8px;width:31.2px;height:31.2px;"><path d="M5 0.6L6.3 3.7L9.6 4L7.1 6.2L7.9 9.4L5 7.7L2.1 9.4L2.9 6.2L0.4 4L3.7 3.7Z" fill="#2f9de0"/></svg>
<svg viewBox="0 0 10 10" style="left:12px;top:846px;width:31.2px;height:31.2px;"><path d="M1.4 1.6V8.8H8.6" fill="none" stroke="#d0d0d0" stroke-width="1.1"/><path d="M3.4 6.8L8.4 1.4" stroke="#d0d0d0" stroke-width="1.5" stroke-linecap="round"/></svg>
</div>
<div style="left:2587.2px;top:121.6px;width:387.6px;height:359.2px;background:#323232;"><div style="left:0px;top:0px;width:387.6px;height:24px;background:#262626;"></div>
<div style="left:2.4px;top:0px;width:47.2px;height:24.8px;background:#383838;"></div>
<div style="left:8.8px;top:0.08px;font-size:17.6px;line-height:24.64px;color:#f0f0f0;white-space:nowrap;font-weight:bold;">属性</div>
<div style="left:67.2px;top:0.36px;font-size:17.2px;line-height:24.08px;color:#8a8a8a;white-space:nowrap;">颜色</div>
<div style="left:125.6px;top:0.36px;font-size:17.2px;line-height:24.08px;color:#8a8a8a;white-space:nowrap;">色板</div>
<div style="left:184px;top:0.36px;font-size:17.2px;line-height:24.08px;color:#8a8a8a;white-space:nowrap;">调整</div>
<div style="left:242.4px;top:0.36px;font-size:17.2px;line-height:24.08px;color:#8a8a8a;white-space:nowrap;">样式</div>
<svg viewBox="0 0 10 10" style="left:362.4px;top:5.6px;width:13.6px;height:13.6px;"><path d="M0.5 2H9.5M0.5 5H9.5M0.5 8H9.5" stroke="#a0a0a0" stroke-width="1.5"/></svg>
<svg viewBox="0 0 10 10" style="left:15.2px;top:34px;width:33.6px;height:33.6px;"><rect x="0.6" y="1.4" width="8.8" height="7.2" rx="1.4" fill="#f4f4f4" stroke="#111" stroke-width="0.9"/><ellipse cx="5" cy="5" rx="2.5" ry="2" fill="#111"/></svg>
<div style="left:59.2px;top:38.88px;font-size:17.6px;line-height:24.64px;color:#bdbdbd;white-space:nowrap;">蒙版</div>
<div style="left:0px;top:74px;width:387.6px;height:2.8px;background:#282828;"></div>
<div style="left:9.2px;top:86.4px;width:50px;height:51.2px;background:#8a8a8a;border:1.4px solid #a4a4a4;box-sizing:border-box;"><svg viewBox="0 0 12.5 12.8" style="left:0px;top:0px;width:50px;height:51.2px;"><g transform="translate(6.25 6.40) scale(0.0594) translate(-321.90 -215.65)"><path d="M390.31 198.61A70.50 70.50 0 0 1 390.31 232.69A21.00 21.00 0 0 0 370.87 266.37A70.50 70.50 0 0 1 341.34 283.42A21.00 21.00 0 0 0 302.46 283.42A70.50 70.50 0 0 1 272.93 266.37A21.00 21.00 0 0 0 253.49 232.69A70.50 70.50 0 0 1 253.49 198.61A21.00 21.00 0 0 0 272.93 164.93A70.50 70.50 0 0 1 302.46 147.88A21.00 21.00 0 0 0 341.34 147.88A70.50 70.50 0 0 1 370.87 164.93A21.00 21.00 0 0 0 390.31 198.61Z" fill="none" stroke="#ffffff" stroke-width="13.0" stroke-linejoin="round"/><circle cx="321.90" cy="215.65" r="24.2" fill="none" stroke="#ffffff" stroke-width="13.0"/></g></svg>
</div>
<div style="left:67.2px;top:100.2px;font-size:18px;line-height:25.2px;color:#6c6c6c;white-space:nowrap;">矢量蒙版</div>
<svg viewBox="0 0 10 10" style="left:283.6px;top:99.6px;width:26.4px;height:26.4px;"><rect x="0" y="0" width="10" height="10" rx="1.8" fill="#141414"/><rect x="1.8" y="1.8" width="4.8" height="4.8" fill="#e8e8e8"/><rect x="4.2" y="4.2" width="4.2" height="4.2" fill="#141414" stroke="#e8e8e8" stroke-width="0.9"/></svg>
<svg viewBox="0 0 10 10" style="left:318.4px;top:98.4px;width:28.8px;height:28.8px;"><rect x="0" y="0.5" width="10" height="9" rx="1.8" fill="#141414"/><rect x="2.6" y="2.8" width="4.8" height="4.4" fill="#f0f0f0"/><path d="M1.8 2H3.4V3.6H1.8ZM6.6 2H8.2V3.6H6.6ZM1.8 6.4H3.4V8H1.8ZM6.6 6.4H8.2V8H6.6Z" fill="#f0f0f0"/></svg>
<div style="left:366.4px;top:76.8px;width:21.2px;height:243.2px;background:#2a2a2a;"></div>
<svg viewBox="0 0 10 10" style="left:369.6px;top:85.6px;width:12px;height:12px;"><path d="M1.5 6.8L5 3.2L8.5 6.8" fill="none" stroke="#b0b0b0" stroke-width="1.6"/></svg>
<div style="left:370.4px;top:103.2px;width:10.8px;height:116px;background:#4c4c4c;border-radius:2.4px;"></div>
<svg viewBox="0 0 10 10" style="left:369.6px;top:299.6px;width:12px;height:12px;"><path d="M1.5 3.2L5 6.8L8.5 3.2" fill="none" stroke="#b0b0b0" stroke-width="1.6"/></svg>
<div style="left:20px;top:187.52px;font-size:18.4px;line-height:25.76px;color:#a8a8a8;white-space:nowrap;">浓度:</div>
<div style="left:260px;top:187.24px;font-size:18.8px;line-height:26.32px;color:#e0e0e0;white-space:nowrap;">100%</div>
<div style="left:20px;top:217.6px;width:325.2px;height:3.6px;background:#5e5e5e;"></div>
<svg viewBox="0 0 10 10" style="left:330.8px;top:212.8px;width:19.2px;height:19.2px;"><path d="M0.6 9.4Q0.6 4.4 5 0.8Q9.4 4.4 9.4 9.4Z" fill="#f4f4f4" stroke="#111" stroke-width="0.9"/></svg>
<div style="left:20px;top:265.52px;font-size:18.4px;line-height:25.76px;color:#a8a8a8;white-space:nowrap;">羽化:</div>
<div style="left:256px;top:265.24px;font-size:18.8px;line-height:26.32px;color:#e0e0e0;white-space:nowrap;">0.0 像素</div>
<div style="left:256px;top:287.6px;width:89.2px;height:1.6px;background:#5a5a5a;"></div>
<div style="left:20px;top:296.8px;width:325.2px;height:3.6px;background:#5e5e5e;"></div>
<svg viewBox="0 0 10 10" style="left:11.6px;top:292.8px;width:19.2px;height:19.2px;"><path d="M0.6 9.4Q0.6 4.4 5 0.8Q9.4 4.4 9.4 9.4Z" fill="#f4f4f4" stroke="#111" stroke-width="0.9"/></svg>
<div style="left:0px;top:319.6px;width:387.6px;height:2px;background:#2a2a2a;"></div>
<div style="left:263.6px;top:321.6px;width:44.4px;height:37.6px;background:#454545;"></div>
<svg viewBox="0 0 10 10" style="left:183.2px;top:330.4px;width:20.8px;height:20.8px;"><rect x="1" y="1" width="8" height="8" fill="none" stroke="#b8b8b8" stroke-width="1.1" stroke-dasharray="2 1.1"/></svg>
<svg viewBox="0 0 10 10" style="left:225.6px;top:329.6px;width:24px;height:24px;"><path d="M5 1L9 5L5 9L1 5Z" fill="#7a7a7a"/><path d="M5 3.2L6.8 5L5 6.8L3.2 5Z" fill="#2c2c2c"/></svg>
<svg viewBox="0 0 10 10" style="left:273.2px;top:328px;width:24.8px;height:24.8px;"><path d="M0.3 5Q5 -0.4 9.7 5Q5 10.4 0.3 5Z" fill="#ececec"/><circle cx="5" cy="5" r="1.6" fill="#262626"/></svg>
<svg viewBox="0 0 10 10" style="left:320px;top:330px;width:21.6px;height:21.6px;"><path d="M2 3H8V9.2H2Z" fill="#666"/><path d="M1.2 2.2H8.8M3.8 1H6.2" stroke="#666" stroke-width="1.1"/></svg>
</div>
<div style="left:2587.2px;top:487.2px;width:387.6px;height:1187.2px;background:#323232;"><div style="left:0px;top:0px;width:387.6px;height:24.8px;background:#262626;"></div>
<div style="left:2.4px;top:0px;width:47.2px;height:25.6px;background:#383838;"></div>
<div style="left:8.8px;top:0.48px;font-size:17.6px;line-height:24.64px;color:#f0f0f0;white-space:nowrap;font-weight:bold;">图层</div>
<div style="left:68px;top:0.76px;font-size:17.2px;line-height:24.08px;color:#8a8a8a;white-space:nowrap;">通道</div>
<div style="left:127.2px;top:0.76px;font-size:17.2px;line-height:24.08px;color:#8a8a8a;white-space:nowrap;">路径</div>
<svg viewBox="0 0 10 10" style="left:362.4px;top:6.8px;width:13.6px;height:13.6px;"><path d="M0.5 2H9.5M0.5 5H9.5M0.5 8H9.5" stroke="#a0a0a0" stroke-width="1.5"/></svg>
<div style="left:7.2px;top:36.4px;width:131.2px;height:32.4px;background:#252525;border-radius:2.4px;"><svg viewBox="0 0 10 10" style="left:6.4px;top:6.8px;width:19.2px;height:19.2px;"><circle cx="6" cy="4" r="2.6" fill="none" stroke="#d6d6d6" stroke-width="1.3"/><path d="M4 6L1 9" stroke="#d6d6d6" stroke-width="1.5"/></svg>
<div style="left:32.4px;top:4.08px;font-size:17.6px;line-height:24.64px;color:#dcdcdc;white-space:nowrap;">类型</div>
<svg viewBox="0 0 10 10" style="left:113.6px;top:11.2px;width:12px;height:12px;"><path d="M1.5 3.2L5 6.8L8.5 3.2" fill="none" stroke="#a8a8a8" stroke-width="1.6"/></svg>
</div>
<svg viewBox="0 0 10 10" style="left:160.8px;top:41.6px;width:22.4px;height:22.4px;"><rect x="0.8" y="1.6" width="8.4" height="6.8" rx="1" fill="none" stroke="#d6d6d6" stroke-width="1.2"/><path d="M1.4 7.6L3.8 4.6L5.6 6.4L6.8 5.4L8.6 7.6Z" fill="#d6d6d6"/></svg>
<svg viewBox="0 0 10 10" style="left:199.6px;top:41.6px;width:22.4px;height:22.4px;"><circle cx="5" cy="5" r="3.8" fill="none" stroke="#d6d6d6" stroke-width="1.2"/><path d="M5 1.2A3.8 3.8 0 0 0 5 8.8Z" fill="#d6d6d6"/></svg>
<svg viewBox="0 0 10 10" style="left:236.8px;top:41.6px;width:22.4px;height:22.4px;"><path d="M1.4 1.4H8.6V3.4H7.6V2.8H5.9V7.8H6.9V8.8H3.1V7.8H4.1V2.8H2.4V3.4H1.4Z" fill="#d6d6d6"/></svg>
<svg viewBox="0 0 10 10" style="left:272.4px;top:41.2px;width:23.2px;height:23.2px;"><rect x="2" y="2" width="6" height="6" fill="none" stroke="#d6d6d6" stroke-width="1"/><path d="M0.8 0.8H3.2V3.2H0.8ZM6.8 0.8H9.2V3.2H6.8ZM0.8 6.8H3.2V9.2H0.8ZM6.8 6.8H9.2V9.2H6.8Z" fill="#d6d6d6"/></svg>
<svg viewBox="0 0 10 10" style="left:311.2px;top:41.2px;width:23.2px;height:23.2px;"><path d="M1 3.4H6.4V9H1Z" fill="#d6d6d6"/><path d="M3 3V1H9V7H7" fill="none" stroke="#d6d6d6" stroke-width="1.1"/></svg>
<div style="left:355.6px;top:37.6px;width:16.8px;height:31.2px;background:#1c1c1c;border-radius:8.4px;"></div>
<div style="left:356.8px;top:38.8px;width:14.4px;height:15.6px;background:#f0f0f0;border-radius:50%;"></div>
<div style="left:7.2px;top:79.6px;width:176.8px;height:31.6px;background:#252525;border-radius:2.4px;"><div style="left:11.2px;top:3.28px;font-size:17.6px;line-height:24.64px;color:#ececec;white-space:nowrap;">正常</div>
<svg viewBox="0 0 10 10" style="left:162.4px;top:10.4px;width:12px;height:12px;"><path d="M1.5 3.2L5 6.8L8.5 3.2" fill="none" stroke="#a8a8a8" stroke-width="1.6"/></svg>
</div>
<div style="left:199.6px;top:82.32px;font-size:18.4px;line-height:25.76px;color:#a8a8a8;white-space:nowrap;">不透明度:</div>
<div style="left:284px;top:79.6px;width:88.8px;height:31.6px;background:#252525;border-radius:2.4px;"><div style="left:7.2px;top:3.28px;font-size:17.6px;line-height:24.64px;color:#e0e0e0;white-space:nowrap;">100%</div>
<svg viewBox="0 0 10 10" style="left:72.8px;top:10.4px;width:12px;height:12px;"><path d="M1.5 3.2L5 6.8L8.5 3.2" fill="none" stroke="#a8a8a8" stroke-width="1.6"/></svg>
</div>
<div style="left:7.2px;top:124.72px;font-size:18.4px;line-height:25.76px;color:#a8a8a8;white-space:nowrap;">锁定:</div>
<svg viewBox="0 0 10 10" style="left:64px;top:127.2px;width:20.8px;height:20.8px;"><rect x="1" y="1" width="8" height="8" rx="1" fill="none" stroke="#9a9a9a" stroke-width="1"/><path d="M1.5 1.5H4V4H1.5ZM6 1.5H8.5V4H6ZM4 4H6V6H4ZM1.5 6H4V8.5H1.5ZM6 6H8.5V8.5H6Z" fill="#9a9a9a"/></svg>
<svg viewBox="0 0 10 10" style="left:98.4px;top:126.8px;width:21.6px;height:21.6px;"><path d="M9 0.8L4.2 5.6" stroke="#d6d6d6" stroke-width="1.5" stroke-linecap="round"/><path d="M3.6 5.2L4.8 6.4Q4 8.6 1 9.2Q2 7.6 2.2 6.4Q2.6 5.2 3.6 5.2Z" fill="#d6d6d6"/></svg>
<svg viewBox="0 0 10 10" style="left:132.4px;top:126.4px;width:22.4px;height:22.4px;"><path d="M5 0.4L6.7 2.6H5.6V4.4H7.4V3.3L9.6 5L7.4 6.7V5.6H5.6V7.4H6.7L5 9.6L3.3 7.4H4.4V5.6H2.6V6.7L0.4 5L2.6 3.3V4.4H4.4V2.6H3.3Z" fill="#d6d6d6"/></svg>
<svg viewBox="0 0 10 10" style="left:167.2px;top:126.4px;width:22.4px;height:22.4px;"><path d="M1 1.6H6.6V7.6H1Z" fill="none" stroke="#d6d6d6" stroke-width="1.1"/><path d="M4.6 3.6H9V9H4.6Z" fill="#d6d6d6"/></svg>
<svg viewBox="0 0 10 10" style="left:201.6px;top:126.4px;width:22.4px;height:22.4px;"><rect x="1.6" y="4.4" width="6.8" height="4.8" rx="0.8" fill="#d6d6d6"/><path d="M3.2 4.6V3Q3.2 1.2 5 1.2Q6.8 1.2 6.8 3V4.6" fill="none" stroke="#d6d6d6" stroke-width="1.2"/></svg>
<div style="left:236.8px;top:124.72px;font-size:18.4px;line-height:25.76px;color:#a8a8a8;white-space:nowrap;">填充:</div>
<div style="left:284px;top:121.6px;width:88.8px;height:31.2px;background:#252525;border-radius:2.4px;"><div style="left:7.2px;top:3.68px;font-size:17.6px;line-height:24.64px;color:#e0e0e0;white-space:nowrap;">100%</div>
<svg viewBox="0 0 10 10" style="left:72.8px;top:10.8px;width:12px;height:12px;"><path d="M1.5 3.2L5 6.8L8.5 3.2" fill="none" stroke="#a8a8a8" stroke-width="1.6"/></svg>
</div>
<div style="left:0px;top:158.4px;width:387.6px;height:992.8px;background:#2b2b2b;"></div>
<div style="left:364.8px;top:158.4px;width:22.8px;height:992.8px;background:#292929;"></div>
<div style="left:0px;top:158px;width:364.8px;height:2.4px;background:#262626;"></div>
<div style="left:0px;top:160.4px;width:363.2px;height:58px;background:#323232;"></div>
<div style="left:42.4px;top:160.4px;width:320.8px;height:58px;background:#4c4c4c;"></div>
<div style="left:0px;top:220.8px;width:363.2px;height:58.8px;background:#323232;"></div>
<svg viewBox="0 0 10 10" style="left:8.8px;top:178.4px;width:25.6px;height:25.6px;"><path d="M0.3 5Q5 -0.4 9.7 5Q5 10.4 0.3 5Z" fill="#ececec"/><circle cx="5" cy="5" r="1.6" fill="#262626"/></svg>
<div style="left:49.2px;top:161.6px;width:57.2px;height:56px;background:#ffffff;background:repeating-conic-gradient(#ffffff 0 25%,#cfcfcf 0 50%) 0 0/9.6px 9.6px;"><svg viewBox="0 0 14.3 14" style="left:0px;top:0px;width:57.2px;height:56px;"><g transform="translate(6.90 6.50) scale(0.0529) translate(-321.90 -215.65)"><path d="M390.31 198.61A70.50 70.50 0 0 1 390.31 232.69A21.00 21.00 0 0 0 370.87 266.37A70.50 70.50 0 0 1 341.34 283.42A21.00 21.00 0 0 0 302.46 283.42A70.50 70.50 0 0 1 272.93 266.37A21.00 21.00 0 0 0 253.49 232.69A70.50 70.50 0 0 1 253.49 198.61A21.00 21.00 0 0 0 272.93 164.93A70.50 70.50 0 0 1 302.46 147.88A21.00 21.00 0 0 0 341.34 147.88A70.50 70.50 0 0 1 370.87 164.93A21.00 21.00 0 0 0 390.31 198.61Z" fill="none" stroke="#f44040" stroke-width="17.0" stroke-linejoin="round"/><circle cx="321.90" cy="215.65" r="24.2" fill="none" stroke="#f44040" stroke-width="17.0"/></g></svg>
</div>
<svg viewBox="0 0 14.3 14" style="left:48px;top:160.4px;width:59.6px;height:58.4px;"><rect x="0.4" y="0.4" width="13.5" height="13.2" fill="none" stroke="#3a3a3a" stroke-width="0.9"/><path d="M0.4 3.4V0.4H3.4M10.9 0.4H13.9V3.4M13.9 10.6V13.6H10.9M3.4 13.6H0.4V10.6" fill="none" stroke="#f4f4f4" stroke-width="1"/></svg>
<svg viewBox="0 0 10 10" style="left:84px;top:194px;width:20px;height:20px;"><rect x="0.4" y="0.4" width="9.2" height="9.2" fill="#d8d8d8" stroke="#555" stroke-width="0.8"/><rect x="3" y="3" width="4" height="4" fill="none" stroke="#444" stroke-width="0.9"/><path d="M2 2H4V4H2ZM6 2H8V4H6ZM2 6H4V8H2ZM6 6H8V8H6Z" fill="#444"/></svg>
<div style="left:116px;top:178.6px;font-size:18px;line-height:25.2px;color:#e4e4e4;white-space:nowrap;">形状 1</div>
<div style="left:0px;top:218.4px;width:363.2px;height:2.4px;background:#292929;"></div>
<svg viewBox="0 0 10 10" style="left:8.8px;top:238.4px;width:25.6px;height:25.6px;"><path d="M0.3 5Q5 -0.4 9.7 5Q5 10.4 0.3 5Z" fill="#ececec"/><circle cx="5" cy="5" r="1.6" fill="#262626"/></svg>
<div style="left:50.8px;top:226px;width:51.2px;height:48.4px;background:#ffffff;border:1.4px solid #161616;box-sizing:border-box;"></div>
<div style="left:116px;top:238.6px;font-size:18px;line-height:25.2px;color:#e0e0e0;white-space:nowrap;">背景</div>
<svg viewBox="0 0 10 10" style="left:316.8px;top:238px;width:25.6px;height:25.6px;"><path d="M1.4 9V4.6L2.6 4.2Q2.8 1 5 1Q7.2 1 7.4 4.2L8.6 4.6V9Z" fill="#c2c2c2" stroke="#1a1a1a" stroke-width="1.2" paint-order="stroke"/><path d="M3.9 4.3Q4 2.6 5 2.6Q6 2.6 6.1 4.3Z" fill="#6a6a6a"/></svg>
<div style="left:0px;top:1151.2px;width:387.6px;height:36px;background:#343434;"></div>
<svg viewBox="0 0 10 10" style="left:71.2px;top:1159.2px;width:20.8px;height:20.8px;"><g fill="none" stroke="#6e6e6e" stroke-width="1.3"><rect x="0.6" y="3" width="5" height="4" rx="2"/><rect x="4.4" y="3" width="5" height="4" rx="2"/></g></svg>
<div style="left:126px;top:1156.72px;font-size:18.4px;line-height:25.76px;color:#c4c4c4;white-space:nowrap;font-weight:bold;transform:translateX(-50%);font-family:'Liberation Serif',serif;"><i>fx</i></div>
<svg viewBox="0 0 10 10" style="left:154.8px;top:1158.8px;width:21.6px;height:21.6px;"><rect x="0.6" y="1.6" width="8.8" height="6.8" rx="1" fill="#ececec"/><circle cx="5" cy="5" r="2" fill="#222"/></svg>
<svg viewBox="0 0 10 10" style="left:199.2px;top:1158.8px;width:21.6px;height:21.6px;"><circle cx="5" cy="5" r="3.8" fill="none" stroke="#c4c4c4" stroke-width="1.2"/><path d="M2.3 7.7A3.8 3.8 0 0 0 7.7 2.3Z" fill="#c4c4c4"/></svg>
<svg viewBox="0 0 10 10" style="left:238.4px;top:1158.4px;width:22.4px;height:22.4px;"><path d="M0.8 2H4L5 3.2H9.2V8.4H0.8Z" fill="#c4c4c4"/></svg>
<svg viewBox="0 0 10 10" style="left:280.8px;top:1158.8px;width:21.6px;height:21.6px;"><path d="M1.2 1.2H6.4L8.8 3.6V8.8H1.2Z" fill="none" stroke="#c4c4c4" stroke-width="1.2"/><path d="M6 1.4V4H8.6" fill="none" stroke="#c4c4c4" stroke-width="1"/></svg>
<svg viewBox="0 0 10 10" style="left:322.8px;top:1158.8px;width:21.6px;height:21.6px;"><path d="M2 3H8V9.2H2Z" fill="#c4c4c4"/><path d="M1.2 2.2H8.8M3.8 1H6.2" stroke="#c4c4c4" stroke-width="1.1"/></svg>
</div>
<div style="left:2493.6px;top:132px;width:28px;height:1519.2px;background:#2a2a2a;"></div>
<div style="left:2118.4px;top:761.2px;width:402px;height:588.8px;background:#3b3b3b;box-shadow:0 0 0 1.6px #1c1c1c;"><div style="left:0px;top:0px;width:402px;height:26px;background:#262626;"></div>
<div style="left:4px;top:1.2px;width:98.4px;height:25.2px;background:#383838;"><div style="left:4.8px;top:-0.48px;font-size:18.4px;line-height:25.76px;color:#e0e0e0;white-space:nowrap;-webkit-text-stroke:0.2px;">Cutterman</div>
</div>
<svg viewBox="0 0 10 10" style="left:340px;top:5.2px;width:15.2px;height:15.2px;"><path d="M0.6 1.6L4 5L0.6 8.4M5.6 1.6L9 5L5.6 8.4" fill="none" stroke="#d0d0d0" stroke-width="1.7"/></svg>
<div style="left:365.6px;top:5.2px;width:1.6px;height:15.2px;background:#555;"></div>
<svg viewBox="0 0 10 10" style="left:379.6px;top:6px;width:13.6px;height:13.6px;"><path d="M0.5 2H9.5M0.5 5H9.5M0.5 8H9.5" stroke="#a0a0a0" stroke-width="1.5"/></svg>
<div style="left:0px;top:26px;width:402px;height:52.8px;background:#414141;"></div>
<div style="left:0px;top:78px;width:402px;height:2.8px;background:#252525;"></div>
<svg viewBox="0 0 10 10" style="left:12.8px;top:40.8px;width:24px;height:24px;"><circle cx="5" cy="3.4" r="2.3" fill="none" stroke="#1c1c1c" stroke-width="1.4"/><path d="M1 9.4Q1 5.8 5 5.8Q9 5.8 9 9.4" fill="none" stroke="#1c1c1c" stroke-width="1.4"/></svg>
<div style="left:202.8px;top:40.52px;font-size:20.4px;line-height:28.56px;color:#8e8e8e;white-space:nowrap;font-weight:bold;transform:translateX(-50%);letter-spacing:2.96px;">CUTTERMAN</div>
<svg viewBox="0 0 10 10" style="left:368px;top:43.6px;width:19.2px;height:19.2px;"><circle cx="5" cy="5" r="3.4" fill="none" stroke="#202020" stroke-width="1.7" stroke-dasharray="2.1 0.6"/><circle cx="5" cy="5" r="2.6" fill="none" stroke="#202020" stroke-width="1.2"/></svg>
<div style="left:0px;top:80.8px;width:402px;height:62.8px;background:#333333;"></div>
<svg viewBox="0 0 10 10" style="left:75.2px;top:96.8px;width:34.4px;height:34.4px;"><path d="M5.3 2.6Q5.2 1 6.6 0.4Q6.8 1.9 5.3 2.6Z" fill="#e8743a"/><path d="M5 3.2Q6.2 2.4 7.4 2.8Q8.4 3.2 8.8 4Q7.4 4.9 7.8 6.4Q8.1 7.3 9 7.7Q8.4 9.2 7.4 9.7Q6.6 10 5.9 9.6Q5.1 9.3 4.4 9.6Q3.5 10 2.8 9.4Q1.2 7.8 1.2 5.6Q1.3 3.4 3 2.8Q4 2.5 5 3.2Z" fill="#e8743a"/></svg>
<svg viewBox="0 0 10 10" style="left:183.6px;top:96px;width:36.8px;height:36.8px;"><path d="M2.6 3.4A2.4 2.3 0 0 1 7.4 3.4Z" fill="#d2d2d2"/><rect x="2.6" y="3.8" width="4.8" height="3.8" rx="0.5" fill="#d2d2d2"/><rect x="1.1" y="3.8" width="1.1" height="3.1" rx="0.55" fill="#d2d2d2"/><rect x="7.8" y="3.8" width="1.1" height="3.1" rx="0.55" fill="#d2d2d2"/><rect x="3.4" y="7.2" width="1.1" height="2" rx="0.55" fill="#d2d2d2"/><rect x="5.5" y="7.2" width="1.1" height="2" rx="0.55" fill="#d2d2d2"/><path d="M3.2 1.6L2.7 0.8M6.8 1.6L7.3 0.8" stroke="#d2d2d2" stroke-width="0.5"/></svg>
<svg viewBox="0 0 10 10" style="left:292.4px;top:96px;width:35.2px;height:35.2px;"><rect x="0.9" y="1.5" width="8.2" height="5.6" rx="0.7" fill="none" stroke="#e4e4e4" stroke-width="0.85"/><path d="M3.8 7.3H6.2L6.8 8.8H3.2Z" fill="#e4e4e4"/></svg>
<div style="left:42.4px;top:141.6px;width:102px;height:4.4px;background:#e8743a;"></div>
<div style="left:40.8px;top:164.4px;width:320.8px;height:59.6px;background:linear-gradient(#6e6e6e,#555);border-radius:2.8px;box-shadow:0 0 0 1.4px #2a2a2a;"><svg viewBox="0 0 10 10" style="left:79.2px;top:19.6px;width:24.8px;height:24.8px;"><path d="M5.4 1.2H2Q1 1.2 1 2.2V8Q1 9 2 9H7.8Q8.8 9 8.8 8V5.6" fill="none" stroke="#fff" stroke-width="1.4"/><path d="M4 6L8.2 1.8" stroke="#fff" stroke-width="1.5"/><path d="M5.6 0.8H9.2V4.4Z" fill="#fff"/></svg>
<div style="left:110.4px;top:17.56px;font-size:21.2px;line-height:29.68px;color:#ffffff;white-space:nowrap;">导出选中图层</div>
</div>
<div style="left:39.6px;top:243.6px;width:23.6px;height:24.4px;background:#2e2e2e;border-radius:3.2px;"></div>
<div style="left:74.4px;top:242.72px;font-size:18.4px;line-height:25.76px;color:#7c7c7c;white-space:nowrap;">合并导出选中的图层</div>
<div style="left:0px;top:282.8px;width:402px;height:2px;background:#353535;"></div>
<div style="left:37.6px;top:312.72px;font-size:18.4px;line-height:25.76px;color:#8e8e8e;white-space:nowrap;">固定尺寸</div>
<div style="left:118px;top:304.4px;width:70px;height:40px;background:#2d2d2d;border-radius:3.6px;"><div style="left:35.2px;top:7.64px;font-size:18.8px;line-height:26.32px;color:#eaeaea;white-space:nowrap;transform:translateX(-50%);">宽</div>
</div>
<div style="left:200.8px;top:309.52px;font-size:22.4px;line-height:31.36px;color:#9c9c9c;white-space:nowrap;transform:translateX(-50%);-webkit-text-stroke:0;">X</div>
<div style="left:212.8px;top:304.4px;width:67.2px;height:40px;background:#2d2d2d;border-radius:3.6px;"><div style="left:33.2px;top:7.64px;font-size:18.8px;line-height:26.32px;color:#eaeaea;white-space:nowrap;transform:translateX(-50%);">高</div>
</div>
<div style="left:288.4px;top:307.6px;width:53.6px;height:35.2px;background:#444;border-radius:3.2px;box-shadow:0 0 0 1.2px #585858;"><div style="left:26.4px;top:4.72px;font-size:18.4px;line-height:25.76px;color:#f0f0f0;white-space:nowrap;transform:translateX(-50%);">清空</div>
</div>
<div style="left:36.8px;top:385.92px;font-size:18.4px;line-height:25.76px;color:#8e8e8e;white-space:nowrap;">分辨率</div>
<div style="left:118px;top:380.8px;width:61.6px;height:35.6px;background:#2b2b2b;border-radius:3.2px;"><svg viewBox="0 0 10 10" style="left:10.4px;top:10.8px;width:14.4px;height:14.4px;"><circle cx="5" cy="5" r="3.4" fill="none" stroke="#e8743a" stroke-width="2.4"/></svg>
<div style="left:38.4px;top:4.84px;font-size:18.8px;line-height:26.32px;color:#e8743a;white-space:nowrap;font-weight:bold;transform:translateX(-50%);">3X</div>
</div>
<div style="left:196.8px;top:380.8px;width:64px;height:35.6px;background:#2b2b2b;border-radius:3.2px;"><svg viewBox="0 0 10 10" style="left:11.6px;top:10.8px;width:14.4px;height:14.4px;"><circle cx="5" cy="5" r="3.4" fill="none" stroke="#e8743a" stroke-width="2.4"/></svg>
<div style="left:39.6px;top:4.84px;font-size:18.8px;line-height:26.32px;color:#e8743a;white-space:nowrap;font-weight:bold;transform:translateX(-50%);">2X</div>
</div>
<div style="left:276.8px;top:380.8px;width:64px;height:35.6px;background:#424242;border-radius:3.2px;box-shadow:0 0 0 1.2px #555;"><svg viewBox="0 0 10 10" style="left:11.6px;top:10.8px;width:14.4px;height:14.4px;"><circle cx="5" cy="5" r="3.4" fill="none" stroke="#dedede" stroke-width="2.4"/></svg>
<div style="left:39.6px;top:4.84px;font-size:18.8px;line-height:26.32px;color:#dedede;white-space:nowrap;font-weight:bold;transform:translateX(-50%);">1X</div>
</div>
<div style="left:0px;top:504.4px;width:402px;height:2px;background:#353535;"></div>
<div style="left:13.6px;top:529.52px;font-size:18.4px;line-height:25.76px;color:#8e8e8e;white-space:nowrap;">保存目录</div>
<div style="left:98.4px;top:526.8px;width:164px;height:31.2px;background:linear-gradient(#3a3a3a,#303030);border-radius:2.8px;box-shadow:0 0 0 1.2px #2a2a2a;"><div style="left:83.6px;top:2.44px;font-size:18.8px;line-height:26.32px;color:#f4f4f4;white-space:nowrap;font-weight:bold;transform:translateX(-50%);">Desktop</div>
</div>
<div style="left:276.8px;top:526.8px;width:39.2px;height:31.2px;background:#414141;border-radius:2.8px;box-shadow:0 0 0 1.2px #565656;"><svg viewBox="0 0 10 10" style="left:9.2px;top:5.2px;width:20.8px;height:20.8px;"><path d="M1 2.2H4L4.8 3.2H9V8.4H1Z" fill="none" stroke="#9a9a9a" stroke-width="1.1" stroke-linejoin="round"/></svg>
</div>
<div style="left:380px;top:554.4px;width:20.4px;height:20px;background:#303030;"></div>
<div style="left:0px;top:574.4px;width:402px;height:9.2px;background:#2c2c2c;"></div>
<div style="left:0px;top:583.6px;width:402px;height:5.2px;background:#3a3a3a;"></div>
</div>
</div>
<div style="left:2544px;top:1520px;width:452px;height:172px;pointer-events:none;"><div style="left:16px;top:-21.84px;font-size:159.2px;line-height:222.88px;color:#909090;white-space:nowrap;font-weight:bold;font-family:DejaVu Sans Condensed,DejaVu Sans,Liberation Sans,sans-serif;font-stretch:condensed;transform-origin:0 50%;transform:scaleX(0.655);letter-spacing:15.6px;-webkit-text-stroke:2.5px #909090;opacity:0.86;">AAA</div>
<div style="left:250.8px;top:22.88px;font-size:21.6px;line-height:30.24px;color:rgba(130,130,130,0.9);white-space:nowrap;-webkit-text-stroke:0;">®</div>
<div style="left:265.6px;top:60.48px;font-size:73.6px;line-height:103.04px;color:rgba(196,196,196,0.9);white-space:nowrap;font-weight:700;font-family:Liberation Serif,Noto Serif CJK SC,serif;transform-origin:0 50%;transform:skewX(-10deg);-webkit-text-stroke:0;">教育</div>
</div>
</div>
</div>
</body>
</html>
